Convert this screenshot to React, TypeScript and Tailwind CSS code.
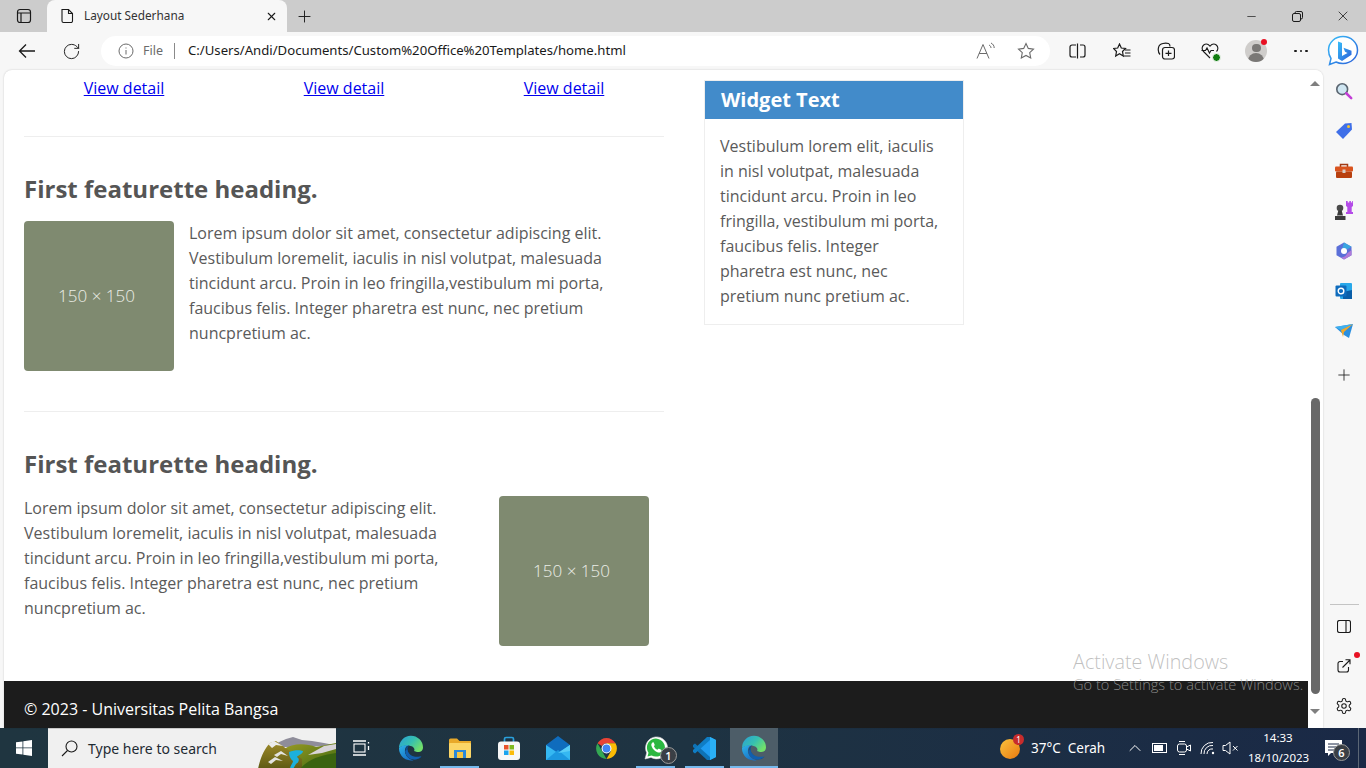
import { ChevronUp, Minus, Plus, RotateCw, X } from "lucide-react";

const loremLines = [
  "Lorem ipsum dolor sit amet, consectetur adipiscing elit.",
  "Vestibulum loremelit, iaculis in nisl volutpat, malesuada",
  "tincidunt arcu. Proin in leo fringilla,vestibulum mi porta,",
  "faucibus felis. Integer pharetra est nunc, nec pretium",
  "nuncpretium ac.",
];

const widgetLines = [
  "Vestibulum lorem elit, iaculis",
  "in nisl volutpat, malesuada",
  "tincidunt arcu. Proin in leo",
  "fringilla, vestibulum mi porta,",
  "faucibus felis. Integer",
  "pharetra est nunc, nec",
  "pretium nunc pretium ac.",
];

const Placeholder = () => (
  <div className="w-[150px] h-[150px] shrink-0 rounded-[4px] bg-[#7f8a70] flex items-center justify-center pr-[5px] pb-[2px] text-[17px] font-light text-[#eceee7]">
    150 × 150
  </div>
);

const Lines = ({ lines }: { lines: string[] }) => (
  <>
    {lines.map((l) => (
      <div key={l} className="whitespace-nowrap">{l}</div>
    ))}
  </>
);

const Heading = () => (
  <h2 className="mt-[35px] mb-[16px] h-[33px] leading-[33px] text-[24px] font-bold text-[#555555]">
    First featurette heading.
  </h2>
);

const EdgeLogo = ({ id }: { id: string }) => (
  <svg width="26" height="26" viewBox="0 0 26 26">
    <defs>
      <linearGradient id={`${id}A`} x1="0" y1="0" x2="0.6" y2="1">
        <stop offset="0" stopColor="#2fb4e8" />
        <stop offset="1" stopColor="#1670c8" />
      </linearGradient>
      <linearGradient id={`${id}B`} x1="0" y1="0" x2="1" y2="0.6">
        <stop offset="0" stopColor="#2a9ed8" />
        <stop offset="0.55" stopColor="#36c0b0" />
        <stop offset="1" stopColor="#72e06a" />
      </linearGradient>
    </defs>
    <path d="M1 13A12 12 0 0 1 25 12.500c0 3.500-3 5-6 4.500l-3-1c1.200-1.500 0-4.500-3.500-5C8 10 3 11 1 13z" fill={`url(#${id}B)`} />
    <path d="M1 13c2-2.500 7-3.500 10-3-3 1-4.500 3.500-4 7 .6 4 4 7.500 8.500 8.200A12 12 0 0 1 1 13z" fill={`url(#${id}A)`} />
    <path d="M7.500 15c-.4 5 4 9.500 9.500 9.500 2.500 0 5-1 6.500-2.800-3.500 1.500-7.500 1-10-1-2.500-2-4-3.700-4-6.500 0-1.500.8-3 2-4-2.200.8-3.800 2.500-4 4.800z" fill="#0c4f96" />
    <path d="M9.500 14.500c0 3 2.500 6 6.500 7 3 .7 6 .2 7.500-.5-2 2-4.500 3.500-7 3.500-5 0-9-3.500-9.300-8.500z" fill="#125fae" />
  </svg>
);

const Landscape = () => (
  <svg width="78" height="40" viewBox="8 0 78 40" className="absolute right-0 top-0">
    <defs>
      <linearGradient id="hill" x1="0" y1="0" x2="0" y2="1">
        <stop offset="0" stopColor="#a08c2a" />
        <stop offset="1" stopColor="#5e5a14" />
      </linearGradient>
      <linearGradient id="hillR" x1="0" y1="0" x2="1" y2="1">
        <stop offset="0" stopColor="#9a9a24" />
        <stop offset="1" stopColor="#3f6a10" />
      </linearGradient>
    </defs>
    <path d="M27 14l9-4 7-2 9 3 10 1 12 2 10 2-24 2H30z" fill="#8f8d9a" />
    <path d="M34 20c8-6 22-6 32-2l20-4v26H40z" fill="url(#hillR)" />
    <path d="M8 40c2-10 6-20 12-26l6-2 8 6 18 12v10z" fill="url(#hill)" />
    <path d="M58 26l16-9 12-2v5l-14 4z" fill="#d8d4d8" />
    <path d="M18 15l6-3 9 5-7-1-4 3z" fill="#ececec" />
    <path d="M24 26l7-4 7 5-7-2-4 3zM18 33l7-5 8 4-7-1-5 4z" fill="#e4e4e0" />
    <path d="M39 23c5-2 11-2 14-1 0 3-5 4-6 6 3 2 2 5-1 7l-3 5h-3c0-3 3-6 3-8-3-2-4-6-4-9z" fill="#1cb0dc" />
    <path d="M50 40c8-10 22-14 36-16v16z" fill="#3a6410" />
  </svg>
);

const Whatsapp = () => (
  <svg width="26" height="26" viewBox="0 0 26 26">
    <path d="M2 24l1.700-6.200A11 11 0 1 1 8 22.400z" fill="#fff" stroke="#d8d8d8" strokeWidth="0.6" />
    <path d="M4.500 21.500l1-3.800A9 9 0 1 1 8.600 20.500z" fill="#2bb741" />
    <path d="M9.500 7.500c-1 .8-1.500 2-1 3.500 1 3 3.500 5.500 6.500 6.500 1.500.4 3-.3 3.500-1.500.2-.7 0-1-.4-1.200l-2-1c-.4-.2-.7-.1-1 .3l-.6.7c-1.500-.5-3-2-3.600-3.500l.6-.7c.2-.3.3-.6.100-1l-.9-2c-.3-.5-.7-.6-1.200-.1z" fill="#fff" />
  </svg>
);

const Pin = ({ children, on, active, w = "w-[49px]" }: { children: React.ReactNode; on?: boolean; active?: boolean; w?: string }) => (
  <div className={`${w} h-full relative flex items-center justify-center ${active ? "bg-[#4d5d68]" : ""}`}>
    {children}
    {on && <div className={`absolute bottom-0 h-[2px] bg-[#76b9ed] ${active ? "inset-x-0" : "inset-x-[5px]"}`} />}
  </div>
);

const ToolBtn = ({ children, className = "w-[44px]" }: { children: React.ReactNode; className?: string }) => (
  <div className={`${className} h-[30px] shrink-0 relative flex items-center justify-center`}>{children}</div>
);

const SideBtn = ({ children }: { children: React.ReactNode }) => (
  <div className="h-[40px] relative flex items-center justify-center pr-px">{children}</div>
);

export default function App() {
  return (
    <div className="w-[1366px] h-[768px] overflow-hidden flex flex-col bg-[#f7f7f7] font-['Open_Sans',sans-serif]">
      {/* Tab strip */}
      <div className="h-[32px] shrink-0 bg-[#cccccc] flex items-end relative">
        <div className="w-[47px] h-full flex items-center justify-center">
          <svg width="16" height="16" viewBox="0 0 16 16" fill="none" stroke="#1a1a1a" strokeWidth="1.200">
            <rect x="1.500" y="1.500" width="13" height="13" rx="2.500" />
            <path d="M1.500 5h13M5 5v9.500" />
          </svg>
        </div>
        <div className="w-[240px] h-full bg-[#f7f7f7] rounded-t-[8px] flex items-center pl-[13px] pr-[10px]">
          <svg width="14" height="16" viewBox="0 0 14 16" fill="none" stroke="#1a1a1a" strokeWidth="1.100">
            <path d="M2 1.500h6.500L12.500 5.500V13a1.500 1.500 0 0 1-1.500 1.500H3.500A1.500 1.500 0 0 1 2 13z" />
            <path d="M8.500 1.500v4h4" />
          </svg>
          <span className="ml-[10px] text-[11.800px] text-[#333333] font-['Noto_Sans',sans-serif]">Layout Sederhana</span>
          <X size={13} className="ml-auto mr-[-1px] text-[#1a1a1a]" />
        </div>
        <div className="w-[34px] h-full flex items-center justify-center">
          <Plus size={19} strokeWidth={1.200} className="text-[#1a1a1a]" />
        </div>
        <div className="ml-auto h-full flex items-center text-[#1a1a1a]">
          <div className="w-[46px] flex justify-center"><Minus size={13} strokeWidth={1.300} /></div>
          <div className="w-[46px] flex justify-center">
            <svg width="11" height="11" viewBox="0 0 11 11" fill="none" stroke="#1a1a1a" strokeWidth="1">
              <rect x="0.500" y="2.500" width="8" height="8" rx="1.500" />
              <path d="M3 2.500V2A1.500 1.500 0 0 1 4.500.5h4.500A1.500 1.500 0 0 1 10.500 2v4.500A1.500 1.500 0 0 1 9 8h-.5" />
            </svg>
          </div>
          <div className="w-[46px] flex justify-center"><X size={16} strokeWidth={1.200} /></div>
        </div>
      </div>

      {/* Toolbar */}
      <div className="h-[38px] shrink-0 flex items-center pl-[5px]">
        <ToolBtn>
          <svg width="18" height="16" viewBox="0 0 18 16" fill="none" stroke="#1a1a1a" strokeWidth="1.300">
            <path d="M17 8H1.500M8 1.500L1.500 8 8 14.500" />
          </svg>
        </ToolBtn>
        <ToolBtn><RotateCw size={19} strokeWidth={1.200} className="text-[#1a1a1a]" /></ToolBtn>
        <div className="ml-[8px] w-[949px] h-[30px] shrink-0 bg-white rounded-full flex items-center pl-[17px]">
          <svg width="16" height="16" viewBox="0 0 16 16" fill="none" stroke="#6b6b6b" strokeWidth="1">
            <circle cx="8" cy="8" r="7" />
            <path d="M8 7v4.500M8 4.500v1" />
          </svg>
          <span className="ml-[9px] text-[12.500px] text-[#6b6b6b] font-['Noto_Sans',sans-serif]">File</span>
          <div className="ml-[11px] w-px h-[16px] bg-[#8a8a8a]" />
          <span className="ml-[13px] text-[13.170px] text-[#1a1a1a] font-['Noto_Sans',sans-serif]">C:/Users/Andi/Documents/Custom%20Office%20Templates/home.html</span>
          <svg className="ml-auto" width="20" height="18" viewBox="0 0 20 18" fill="none" stroke="#6b6b6b" strokeWidth="1">
            <path d="M1 16.500L7 2.500l6 14M3 11.500h8M13 3c1.300.6 2 1.700 2 3M15 1c2 1 3.200 2.800 3.200 5" />
          </svg>
          <svg className="ml-[21px] mr-[15px]" width="18" height="18" viewBox="0 0 18 18" fill="none" stroke="#6b6b6b" strokeWidth="1.100">
            <path d="M9 1.500l2.300 4.900 5.200.7-3.800 3.600 1 5.300L9 13.400 4.300 16l1-5.300L1.500 7.100l5.200-.7z" />
          </svg>
        </div>
        <ToolBtn className="ml-[5px] w-[44px]">
          <svg width="17" height="16" viewBox="0 0 17 16" fill="none" stroke="#1a1a1a" strokeWidth="1.200">
            <path d="M7 2H3a2 2 0 0 0-2 2v8a2 2 0 0 0 2 2h4M11 2h3a2 2 0 0 1 2 2v8a2 2 0 0 1-2 2h-3M8.500.5v15" />
          </svg>
        </ToolBtn>
        <ToolBtn className="ml-px w-[44px]">
          <svg width="18" height="17" viewBox="0 0 18 17" fill="none" stroke="#1a1a1a" strokeWidth="1.200">
            <path d="M6.500 1l1.800 4 4.200.5-3 3 .8 4.500-3.800-2.200-3.800 2.200.8-4.500-3-3L4.700 5z" />
            <path d="M12 7h5.500M12 10h5.500M11 13h6.500" />
          </svg>
        </ToolBtn>
        <ToolBtn>
          <svg width="18" height="18" viewBox="0 0 18 18" fill="none" stroke="#1a1a1a" strokeWidth="1.200">
            <path d="M3 12.500C1.500 11 1 8 1.500 5.500 2 3 3.500 2 6 1.500c2-.4 4-.3 5.500 0 1 .3 1.500 1.500 1.500 3" />
            <rect x="5.500" y="5.500" width="12" height="11.500" rx="2.500" />
            <path d="M11.500 8.500v5.500M8.500 11.300h6" />
          </svg>
        </ToolBtn>
        <ToolBtn>
          <div className="relative">
            <svg width="18" height="18" viewBox="0 0 18 18" fill="none" stroke="#1a1a1a" strokeWidth="1.100">
              <path d="M9 16L2.500 9.500C.5 7.500.8 4.500 2.700 3c2-1.500 4.500-1 6.300 1.200C10.800 2 13.300 1.500 15.300 3c1.900 1.500 2.200 4.500.2 6.500" />
              <path d="M.5 8.500h4l1.500-2.500 2.500 5 1.500-2.500h3" />
            </svg>
            <div className="absolute right-[-2px] bottom-[-2px] w-[9px] h-[9px] rounded-full bg-[#107c10] border border-white" />
          </div>
        </ToolBtn>
        <ToolBtn className="ml-[2px] w-[44px]">
          <div className="w-[22px] h-[22px] rounded-full bg-[#cfcdcb] overflow-hidden flex flex-col items-center">
            <div className="mt-[4px] w-[9px] h-[9px] rounded-full bg-[#7a7876]" />
            <div className="mt-[1px] w-[16px] h-[10px] rounded-t-full bg-[#7a7876]" />
          </div>
          <div className="absolute left-[27px] top-[3px] w-[6px] h-[6px] rounded-full bg-[#e81123]" />
        </ToolBtn>
        <ToolBtn className="ml-px w-[44px]">
          <div className="flex gap-[3px]">
            <div className="w-[2.500px] h-[2.500px] rounded-full bg-[#1a1a1a]" />
            <div className="w-[2.500px] h-[2.500px] rounded-full bg-[#1a1a1a]" />
            <div className="w-[2.500px] h-[2.500px] rounded-full bg-[#1a1a1a]" />
          </div>
        </ToolBtn>
        <div className="w-[40px] flex justify-center">
          <svg width="32" height="32" viewBox="0 0 32 32">
            <defs>
              <linearGradient id="bing" x1="0" y1="0" x2="1" y2="1">
                <stop offset="0" stopColor="#37bdf8" />
                <stop offset="1" stopColor="#2b5fd9" />
              </linearGradient>
            </defs>
            <path d="M16 1.500C8 1.500 1.500 7.500 1.500 15c0 3 .8 6 2.500 8.500l-1.500 6 6.500-2.500c2 1 4.500 1.500 7 1.500 8 0 14.500-6 14.500-13.500S24 1.500 16 1.500z" fill="#fff" stroke="url(#bing)" strokeWidth="1.500" />
            <path d="M11 6.500l4 1.500v13l5.500-3-2.500-1.200-1.500-4 8 3v4L15 26l-4-2.500z" fill="url(#bing)" />
          </svg>
        </div>
      </div>

      {/* Middle: page + edge sidebar */}
      <div className="flex-1 min-h-0 flex pl-[4px]">
        <div className="flex-1 min-w-0 flex bg-white rounded-t-[8px] overflow-hidden relative shadow-[0_0_2px_rgba(0,0,0,0.2)]">
          <div className="flex-1 min-w-0 flex flex-col">
            <div className="flex-1 min-h-0 flex gap-[40px] pl-[20px] text-[16px] leading-[25px] text-[#5a5a5a]">
              <div className="w-[640px]">
                <div className="pt-[6px] ml-[-10px] w-[660px] grid grid-cols-3 text-center text-[#0000ee]">
                  <a className="underline" href="#">View detail</a>
                  <a className="underline" href="#">View detail</a>
                  <a className="underline" href="#">View detail</a>
                </div>
                <hr className="mt-[35px] border-[#eeeeee]" />
                <Heading />
                <div className="flex gap-[15px]">
                  <Placeholder />
                  <div><Lines lines={loremLines} /></div>
                </div>
                <hr className="mt-[40px] border-[#eeeeee]" />
                <Heading />
                <div className="flex justify-between pr-[15px]">
                  <div><Lines lines={loremLines} /></div>
                  <Placeholder />
                </div>
              </div>
              <div className="w-[260px] h-[245px] mt-[10px] border border-[#eeeeee]">
                <div className="h-[38px] bg-[#428bca] pl-[16px] text-[20px] leading-[38px] font-bold text-white">Widget Text</div>
                <div className="pt-[15px] pl-[15px]"><Lines lines={widgetLines} /></div>
              </div>
            </div>
            <footer className="h-[47px] shrink-0 bg-[#1c1c1c] pl-[20px] pt-[16px] text-[16px] leading-[24px] text-white">
              © 2023 - Universitas Pelita Bangsa
            </footer>
          </div>

          {/* Scrollbar */}
          <div className="w-[15px] shrink-0 bg-white flex flex-col items-center pr-px">
            <div className="mt-[11px] w-0 h-0 border-x-[5px] border-x-transparent border-b-[5px] border-b-[#7f7f7f]" />
            <div className="mt-auto w-[9px] h-[296px] rounded-full bg-[#686868]" />
            <div className="mt-[15px] mb-[14px] w-0 h-0 border-x-[5px] border-x-transparent border-t-[5px] border-t-[#7f7f7f]" />
          </div>

          {/* Watermark */}
          <div className="absolute left-[1069px] top-[579px] w-[240px] overflow-hidden whitespace-nowrap font-light text-[#acacac]/75">
            <div className="text-[19.800px] leading-[26px]">Activate Windows</div>
            <div className="text-[14.600px] leading-[20px] mt-[-1px]">Go to Settings to activate Windows.</div>
          </div>
        </div>

        <div className="w-[43px] shrink-0 flex flex-col pt-px pb-[2px]">
          <SideBtn>
            <svg width="18" height="18" viewBox="0 0 20 20" fill="none">
              <circle cx="8" cy="8" r="6" fill="#cfe6f2" stroke="#5a6570" strokeWidth="1.800" />
              <path d="M12.500 12.500L18 18" stroke="#c23dd6" strokeWidth="2.800" strokeLinecap="round" />
            </svg>
          </SideBtn>
          <SideBtn>
            <svg width="18" height="18" viewBox="0 0 18 18">
              <path d="M1 10L10 1.500l6.500-.5.5 6.500L8 17z" fill="#3f6fe8" />
              <circle cx="13.500" cy="4.500" r="1.500" fill="#f4c430" />
            </svg>
          </SideBtn>
          <SideBtn>
            <svg width="18" height="16" viewBox="0 0 18 16">
              <path d="M5.500 4V1.500h7V4" fill="none" stroke="#a13a14" strokeWidth="1.500" />
              <rect x="0" y="3.500" width="18" height="5" rx="1" fill="#d9531e" />
              <rect x="1" y="8.500" width="16" height="6.500" rx="1" fill="#b8400f" />
              <rect x="7.500" y="6.500" width="3" height="3.500" fill="#d8cfc8" />
            </svg>
          </SideBtn>
          <SideBtn>
            <svg width="18" height="20" viewBox="0 0 18 20">
              <path d="M11 0h1.700v1.500h1.600V0h1.600v1.500h1.300V0H18v5l-1.300 1v5H18v2h-7v-2h1.300V6L11 5z" fill="#b44be8" />
              <circle cx="5" cy="7" r="3.300" fill="#4a4a4a" />
              <path d="M3.300 9.500h3.400l1.300 5H2zM0 15h10.500v4H0z" fill="#3c3c3c" />
            </svg>
          </SideBtn>
          <SideBtn>
            <svg width="18" height="18" viewBox="0 0 18 18">
              <path d="M9 0.500l7.500 4.300v8.400L9 17.500l-7.500-4.300V4.800z" fill="#5b6fd8" />
              <path d="M9 0.500l7.500 4.300L12 7.500c-1-1-4-1.500-5 0z" fill="#3aa5e0" />
              <path d="M16.500 8v5.200L9 17.500l-3-2c2 0 5-1 6-4z" fill="#b07ad8" />
              <circle cx="9" cy="9" r="3" fill="#fff" />
            </svg>
          </SideBtn>
          <SideBtn>
            <svg width="18" height="18" viewBox="0 0 18 18">
              <rect x="5" y="1" width="12" height="16" rx="1" fill="#28a8ea" />
              <path d="M8 10l9-2v9H8z" fill="#0a5ea8" />
              <rect x="0.500" y="3.500" width="11" height="11" rx="1" fill="#0f6cbd" />
              <circle cx="6" cy="9" r="2.800" fill="none" stroke="#fff" strokeWidth="1.400" />
            </svg>
          </SideBtn>
          <SideBtn>
            <svg width="18" height="15" viewBox="0 0 18 15">
              <path d="M0 3l18-3-4 14-5-3z" fill="#2a8fe0" />
              <path d="M0 3l18-3-12 6z" fill="#3fb0ef" />
              <path d="M6 6l12-6-9 8-1 5z" fill="#f2a82a" />
            </svg>
          </SideBtn>
          <div className="mt-[4px]">
            <SideBtn><Plus size={18} strokeWidth={1.100} className="text-[#1a1a1a]" /></SideBtn>
          </div>
          <div className="mt-auto mx-[7px] mb-px h-px bg-[#c4c4c4]" />
          <SideBtn>
            <svg width="14" height="13" viewBox="0 0 14 13" fill="none" stroke="#1a1a1a" strokeWidth="1.100">
              <rect x="0.500" y="0.500" width="13" height="12" rx="2" />
              <path d="M9 .5v12" />
            </svg>
          </SideBtn>
          <SideBtn>
            <svg width="14" height="14" viewBox="0 0 14 14" fill="none" stroke="#1a1a1a" strokeWidth="1.100">
              <path d="M6 2.500H3A2 2 0 0 0 1 4.500V11a2 2 0 0 0 2 2h6.500a2 2 0 0 0 2-2V8" />
              <path d="M5.500 8.500L13 1M8.500.8H13v4.500" />
            </svg>
            <div className="absolute left-[31px] top-[6px] w-[6px] h-[6px] rounded-full bg-[#e81123]" />
          </SideBtn>
          <SideBtn>
            <svg width="18" height="18" viewBox="0 0 24 24" fill="none" stroke="#1a1a1a" strokeWidth="1.400">
              <path d="M12.220 2h-.44a2 2 0 0 0-2 2v.18a2 2 0 0 1-1 1.730l-.43.25a2 2 0 0 1-2 0l-.15-.08a2 2 0 0 0-2.730.73l-.22.380a2 2 0 0 0 .73 2.730l.15.100a2 2 0 0 1 1 1.720v.510a2 2 0 0 1-1 1.740l-.15.090a2 2 0 0 0-.73 2.730l.22.380a2 2 0 0 0 2.730.73l.15-.08a2 2 0 0 1 2 0l.43.250a2 2 0 0 1 1 1.730V20a2 2 0 0 0 2 2h.44a2 2 0 0 0 2-2v-.18a2 2 0 0 1 1-1.730l.43-.25a2 2 0 0 1 2 0l.15.080a2 2 0 0 0 2.730-.73l.22-.39a2 2 0 0 0-.73-2.730l-.15-.080a2 2 0 0 1-1-1.740v-.500a2 2 0 0 1 1-1.740l.15-.090a2 2 0 0 0 .73-2.730l-.22-.380a2 2 0 0 0-2.730-.73l-.15.080a2 2 0 0 1-2 0l-.43-.250a2 2 0 0 1-1-1.730V4a2 2 0 0 0-2-2z" />
              <circle cx="12" cy="12" r="3" />
            </svg>
          </SideBtn>
        </div>
      </div>

      {/* Taskbar */}
      <div className="h-[40px] shrink-0 flex items-center bg-gradient-to-r from-[#1f3540] via-[#1e3342] to-[#1a2946] text-white">
        <div className="w-[48px] h-full flex items-center justify-center">
          <svg width="16" height="16" viewBox="0 0 16 16" fill="#fff">
            <path d="M0 2.300L6.500 1.400V7.500H0zM7.300 1.300L16 0v7.500H7.300zM0 8.300h6.500v6.300L0 13.700zM7.300 8.300H16V16l-8.700-1.200z" />
          </svg>
        </div>
        <div className="w-[288px] h-full relative bg-[#f0f0f0] border-t border-[#c8c8c8] overflow-hidden flex items-center pl-[13px]">
          <svg width="17" height="17" viewBox="0 0 17 17" fill="none" stroke="#1a1a1a" strokeWidth="1.100">
            <circle cx="10.500" cy="6.500" r="5.500" />
            <path d="M6.500 10.500L1 16" />
          </svg>
          <span className="ml-[10px] text-[14px] text-[#1f2b33] font-['Noto_Sans',sans-serif]">Type here to search</span>
          <Landscape />
        </div>
        <div className="w-[50px] h-full flex items-center justify-center">
          <svg width="17" height="16" viewBox="0 0 17 16" fill="none" stroke="#fff" strokeWidth="1.100">
            <rect x="1" y="4" width="11" height="8" />
            <path d="M0 1h13M0 15h13M15.500 2v1.500M15.500 6v4" strokeWidth="1.300" />
          </svg>
        </div>
        <Pin><EdgeLogo id="edge1" /></Pin>
        <Pin on>
          <svg width="24" height="22" viewBox="0 0 24 22">
            <path d="M1 3a1.500 1.500 0 0 1 1.500-1.500H9l2.500 2.500H23v4H1z" fill="#e8a92a" />
            <rect x="1" y="6" width="22" height="15" rx="1" fill="#fbd667" />
            <rect x="6" y="13" width="12" height="8" fill="#2a88d8" />
            <rect x="9" y="15" width="6" height="6" fill="#f5c542" />
          </svg>
        </Pin>
        <Pin>
          <svg width="24" height="25" viewBox="0 0 24 25">
            <path d="M7.500 6V3a1.500 1.500 0 0 1 1.500-1.500h6A1.500 1.500 0 0 1 16.500 3v3" fill="none" stroke="#2aa0dc" strokeWidth="1.700" />
            <rect x="1" y="5.500" width="22" height="18.500" rx="3" fill="#f7f7f7" />
            <rect x="7" y="9" width="4.500" height="4.500" fill="#e8532b" />
            <rect x="12.500" y="9" width="4.500" height="4.500" fill="#7fba1f" />
            <rect x="7" y="14.500" width="4.500" height="4.500" fill="#1ba4ef" />
            <rect x="12.500" y="14.500" width="4.500" height="4.500" fill="#fbbc09" />
          </svg>
        </Pin>
        <Pin>
          <svg width="24" height="24" viewBox="0 0 24 24">
            <path d="M0 9L12 0l12 9v15H0z" fill="#0f6cbd" />
            <path d="M0 9l12 8 12-8v15H0z" fill="#35b8f2" />
            <path d="M0 24L12 14l12 10z" fill="#1c98e0" />
            <path d="M12 17l12-8v6z" fill="#59cdf7" />
          </svg>
        </Pin>
        <Pin>
          <svg width="25" height="25" viewBox="0 0 48 48">
            <path d="M6.700 14A20 20 0 0 1 41.300 14H24c-3.700 0-7 2-8.700 5z" fill="#ea4335" />
            <path d="M6.700 14l8.600 15L24 44A20 20 0 0 1 6.700 14z" fill="#34a853" />
            <path d="M41.300 14A20 20 0 0 1 24 44l8.700-15L24 14z" fill="#fbbc05" />
            <circle cx="24" cy="24" r="9.500" fill="#fff" />
            <circle cx="24" cy="24" r="7.500" fill="#4285f4" />
          </svg>
        </Pin>
        <Pin on>
          <Whatsapp />
          <div className="absolute left-[29px] top-[19px] w-[17px] h-[17px] rounded-full bg-[#3a3f45] border border-[#9a9a9a] flex items-center justify-center text-[11px] font-semibold leading-none">1</div>
        </Pin>
        <Pin on>
          <svg width="25" height="25" viewBox="0 0 25 25">
            <path d="M18 1l6 3v17l-6 3L7 13.500z" fill="#1f9cf0" />
            <path d="M18 1v23l6-3V4z" fill="#2ab0f5" />
            <path d="M1 9l2-1.500 15 13.500V24l-3 0L1 11z" fill="#0e72b5" />
            <path d="M1 16l2 1.500L18 4V1L15 1 1 14z" fill="#0f7dc4" />
          </svg>
        </Pin>
        <Pin on active w="w-[48px] ml-px"><EdgeLogo id="edge2" /></Pin>

        {/* Tray */}
        <div className="ml-auto h-full flex items-center text-[13.500px] font-['Noto_Sans',sans-serif]">
          <div className="relative w-[22px] h-[22px]">
            <div className="absolute bottom-0 left-0 w-[20px] h-[20px] rounded-full bg-gradient-to-br from-[#f9c23c] to-[#e8780c]" />
            <div className="absolute top-[-3px] right-[-2px] w-[11px] h-[11px] rounded-full bg-[#c72c2c] flex items-center justify-center text-[8px] leading-none">1</div>
          </div>
          <span className="ml-[9px] w-[74px] whitespace-nowrap">37°C&nbsp; Cerah</span>
          <div className="ml-[18px] w-[24px] flex justify-center"><ChevronUp size={20} strokeWidth={1.200} /></div>
          <div className="w-[24px] flex justify-center">
            <div className="w-[15px] h-[10px] border border-white flex p-px">
              <div className="w-[9px] bg-white" />
            </div>
          </div>
          <div className="ml-px w-[24px] flex justify-center">
            <svg width="16" height="16" viewBox="0 0 16 16" fill="none" stroke="#fff" strokeWidth="1">
              <rect x="1.500" y="4" width="9" height="8" rx="2" />
              <path d="M10.500 7l4-2v6l-4-2M3 1.500h6M3 14.500h6" />
            </svg>
          </div>
          <div className="w-[24px] flex justify-center">
            <svg width="16" height="14" viewBox="0 0 16 14" fill="none" stroke="#fff" strokeWidth="1">
              <path d="M1 13A11 11 0 0 1 13 1.500M4 13a8 8 0 0 1 9-8.500M7 13a5 5 0 0 1 6-5" />
              <circle cx="13" cy="12" r="1.200" fill="#fff" stroke="none" />
            </svg>
          </div>
          <div className="w-[20px] flex justify-center">
            <svg width="17" height="14" viewBox="0 0 17 14" fill="none" stroke="#fff" strokeWidth="1">
              <path d="M1 4.500h2.500L8 1v12L3.500 9.500H1zM11 5l4.500 4.500M15.500 5L11 9.500" />
            </svg>
          </div>
          <div className="ml-[8px] w-[60px] text-center text-[11.500px] leading-[20px]">
            <div>14:33</div>
            <div>18/10/2023</div>
          </div>
          <div className="w-[50px] h-full relative">
            <svg className="absolute left-[17px] top-[12px]" width="17" height="17" viewBox="0 0 17 17">
              <path d="M0 0h17v13H6l-3 3v-3H0z" fill="#fff" />
              <path d="M3 4h11M3 7h11M3 10h8" stroke="#1a2946" strokeWidth="1" />
            </svg>
            <div className="absolute left-[25px] top-[16px] w-[17px] h-[17px] rounded-full bg-[#3a3f45] border border-[#9a9a9a] flex items-center justify-center text-[11px] font-semibold leading-none">6</div>
          </div>
          <div className="w-[8px] h-full border-l border-[#5b6675]" />
        </div>
      </div>
    </div>
  );
}
